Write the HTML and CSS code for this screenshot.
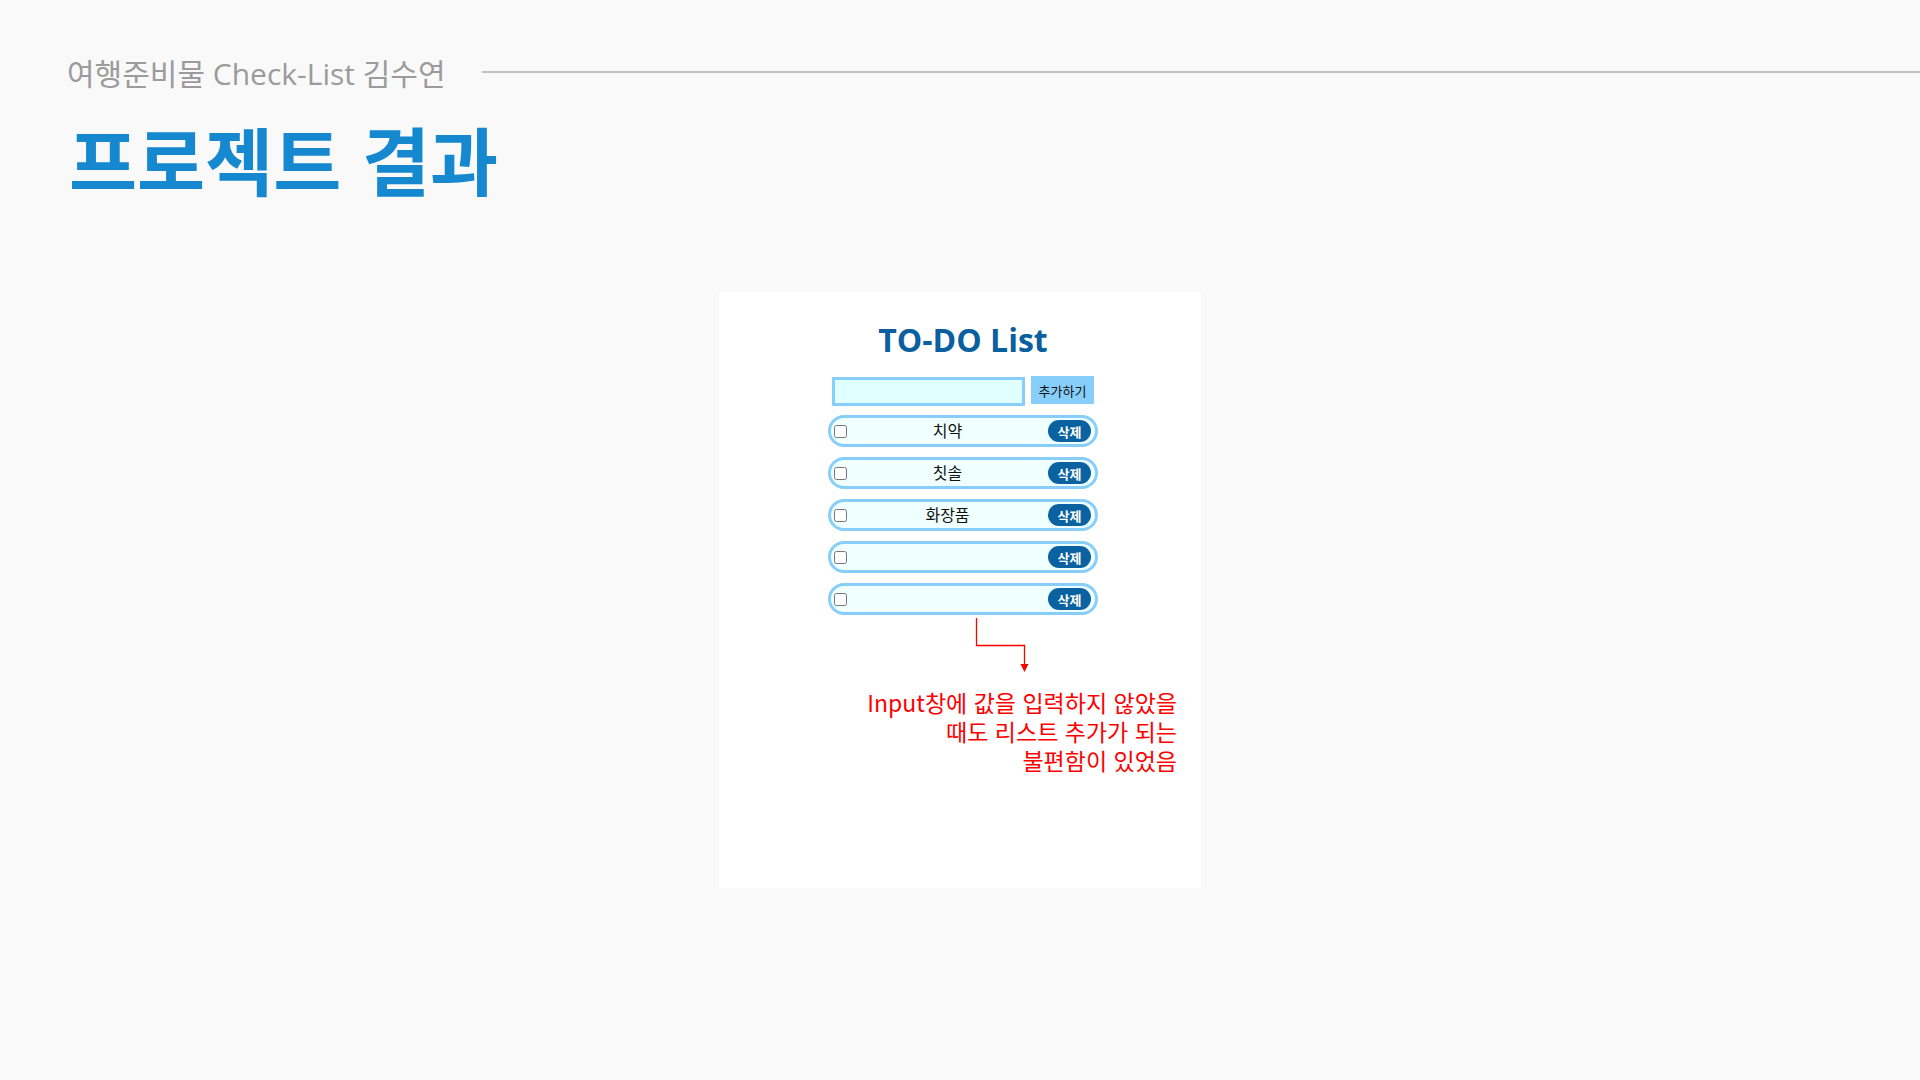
FILE: index.html
```html
<!DOCTYPE html>
<html lang="ko">
<head>
<meta charset="utf-8">
<title>프로젝트 결과</title>
<link rel="stylesheet" href="styles.css">
</head>
<body>
<header class="header">
  <div class="sub-row">
    <span class="sub-title">여행준비물 Check-List 김수연</span>
    <span class="sub-line"></span>
  </div>
  <h1 class="main-title">프로젝트 결과</h1>
</header>
<main class="stage">
  <section class="card">
    <h2 class="todo-title">TO-DO List</h2>
    <div class="todo-body">
      <div class="add-row">
        <input class="add-input" type="text">
        <button class="add-btn">추가하기</button>
      </div>
      <ul class="todo-list">
        <li class="todo-item"><input type="checkbox" class="todo-check"><span class="todo-text">치약</span><button class="del-btn">삭제</button></li>
        <li class="todo-item"><input type="checkbox" class="todo-check"><span class="todo-text">칫솔</span><button class="del-btn">삭제</button></li>
        <li class="todo-item"><input type="checkbox" class="todo-check"><span class="todo-text">화장품</span><button class="del-btn">삭제</button></li>
        <li class="todo-item"><input type="checkbox" class="todo-check"><span class="todo-text"></span><button class="del-btn">삭제</button></li>
        <li class="todo-item"><input type="checkbox" class="todo-check"><span class="todo-text"></span><button class="del-btn">삭제</button></li>
      </ul>
    </div>
    <svg class="arrow" width="60" height="68" viewBox="0 0 60 68">
      <path d="M1.5 2 V29.5 H49.5 V50" fill="none" stroke="#ff0000" stroke-width="1.3"/>
      <path d="M45.5 48 L53.5 48 L49.5 56 Z" fill="#ff0000"/>
    </svg>
    <div class="note">
      <p class="note-line">Input창에 값을 입력하지 않았을</p>
      <p class="note-line">때도 리스트 추가가 되는</p>
      <p class="note-line">불편함이 있었음</p>
    </div>
  </section>
</main>
</body>
</html>
```
FILE: styles.css
```css
* { box-sizing: border-box; }
html, body { margin: 0; padding: 0; }
body {
  width: 1920px;
  height: 1080px;
  background: #f9f9f9;
  font-family: "Open Sans", "Noto Sans CJK KR", sans-serif;
  overflow: hidden;
}
.header { padding: 53px 0 0 67px; }
.sub-row {
  display: flex;
  align-items: center;
  gap: 36px;
  height: 38px;
}
.sub-title {
  font-size: 30px;
  color: #9b9b9b;
  white-space: nowrap;
}
.sub-line {
  flex: 1;
  height: 2px;
  background: #c3c3c3;
}
.main-title {
  margin: 24px 0 0 2px;
  font-family: "Noto Sans CJK KR", sans-serif;
  font-size: 74px;
  line-height: 86px;
  font-weight: 700;
  color: #1588d0;
}
.stage { padding-top: 91px; }
.card {
  width: 482px;
  height: 596px;
  margin: 0 auto;
  background: #ffffff;
  display: flex;
  flex-direction: column;
}
.todo-title {
  margin: 28px 0 0 6px;
  text-align: center;
  font-size: 32px;
  line-height: 40px;
  font-weight: 700;
  color: #0a5f9f;
}
.todo-body {
  margin: 16px 0 0 109px;
  width: 270px;
}
.add-row {
  display: flex;
  align-items: flex-start;
  gap: 6px;
  padding-left: 4px;
}
.add-input {
  width: 193px;
  height: 29px;
  margin: 1px 0 0;
  border: 3px solid #87cefa;
  background: #e0ffff;
  outline: none;
}
.add-btn {
  width: 63px;
  height: 28px;
  border: none;
  background: #87cefa;
  font-family: "Noto Sans CJK KR", sans-serif;
  font-size: 13px;
  color: #111;
  padding: 0;
}
.todo-list {
  list-style: none;
  margin: 9px 0 0;
  padding: 0;
  display: flex;
  flex-direction: column;
  gap: 10px;
}
.todo-item {
  height: 32px;
  border: 3px solid #87cefa;
  border-radius: 16px;
  background: #f0ffff;
  display: flex;
  align-items: center;
  padding: 0 4px 0 3px;
}
.todo-check {
  width: 13px;
  height: 13px;
  margin: 0;
}
.todo-text {
  flex: 1;
  text-align: center;
  font-family: "Noto Sans CJK KR", sans-serif;
  font-size: 16px;
  line-height: 20px;
  margin-top: -3px;
  color: #111;
}
.del-btn {
  width: 43px;
  height: 22px;
  border: none;
  border-radius: 11px;
  background: #0a62a0;
  color: #fff;
  font-family: "Noto Sans CJK KR", sans-serif;
  font-size: 13px;
  font-weight: 700;
  padding: 0;
}
.arrow {
  display: block;
  margin: 1px 0 0 256px;
}
.note {
  margin: 4px 24px 0 0;
  text-align: right;
  font-family: "Noto Sans CJK KR", sans-serif;
  font-size: 23px;
  color: #ff0000;
}
.note-line {
  margin: 0;
  height: 29px;
  line-height: 29px;
}
```
